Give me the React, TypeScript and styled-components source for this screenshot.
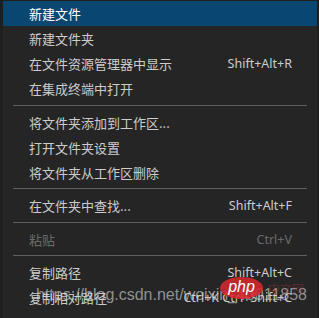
import React from "react";
import styled, { createGlobalStyle } from "styled-components";

const Global = createGlobalStyle`
  html, body { margin: 0; padding: 0; background: #1f1f1f; }
  body { width: 319px; height: 318px; overflow: hidden; }
`;

const Frame = styled.div`
  position: relative;
  width: 319px;
  height: 318px;
  padding: 1px 2px 0 3px;
  box-sizing: border-box;
  font-family: "Noto Sans", "Noto Sans CJK SC", sans-serif;
`;

const Menu = styled.div`
  display: flex;
  flex-direction: column;
  width: 314px;
  height: 317px;
  background: #252526;
`;

const Item = styled.div<{ $active?: boolean; $disabled?: boolean }>`
  display: flex;
  align-items: center;
  justify-content: space-between;
  height: 25px;
  flex: none;
  padding: 0 25px 0 26px;
  font-size: 13px;
  background: ${(p) => (p.$active ? "#094771" : "transparent")};
  color: ${(p) => (p.$active ? "#ffffff" : p.$disabled ? "#6b6b6b" : "#cccccc")};
`;

const Label = styled.span`
  font-family: "Noto Sans CJK SC", sans-serif;
  white-space: nowrap;
`;

const Keys = styled.span`
  font-family: "Noto Sans", sans-serif;
  font-size: 12.5px;
  white-space: nowrap;
`;

const Separator = styled.div`
  flex: none;
  height: 8.5px;
  display: flex;
  align-items: center;
  padding: 0 10px;
  &::after {
    content: "";
    flex: 1;
    height: 1px;
    background: #5f5f5f;
  }
`;

const Watermark = styled.div`
  position: absolute;
  left: 36px;
  top: 286px;
  font-family: "Liberation Sans", Arial, sans-serif;
  font-size: 16px;
  line-height: 18px;
  color: rgba(215, 215, 215, 0.62);
  white-space: nowrap;
  pointer-events: none;
`;

const Logo = styled.div`
  position: absolute;
  left: 220px;
  top: 277px;
  display: flex;
  align-items: center;
  gap: 5px;
  pointer-events: none;
`;

const PhpBadge = styled.div`
  width: 43px;
  height: 22px;
  border-radius: 50%;
  background: rgba(214, 40, 46, 0.88);
  color: #ffffff;
  font-family: "Liberation Sans", Arial, sans-serif;
  font-style: italic;
  font-size: 16px;
  line-height: 20px;
  text-align: center;
`;

const CnText = styled.span`
  font-family: "Noto Sans CJK SC", sans-serif;
  font-size: 12px;
  color: rgba(190, 60, 60, 0.35);
  letter-spacing: 0px;
`;

type Entry =
  | { type: "item"; label: string; keys?: string; active?: boolean; disabled?: boolean }
  | { type: "sep" };

const entries: Entry[] = [
  { type: "item", label: "新建文件", active: true },
  { type: "item", label: "新建文件夹" },
  { type: "item", label: "在文件资源管理器中显示", keys: "Shift+Alt+R" },
  { type: "item", label: "在集成终端中打开" },
  { type: "sep" },
  { type: "item", label: "将文件夹添加到工作区..." },
  { type: "item", label: "打开文件夹设置" },
  { type: "item", label: "将文件夹从工作区删除" },
  { type: "sep" },
  { type: "item", label: "在文件夹中查找...", keys: "Shift+Alt+F" },
  { type: "sep" },
  { type: "item", label: "粘贴", keys: "Ctrl+V", disabled: true },
  { type: "sep" },
  { type: "item", label: "复制路径", keys: "Shift+Alt+C" },
  { type: "item", label: "复制相对路径", keys: "Ctrl+K Ctrl+Shift+C" },
];

export default function App() {
  return (
    <>
      <Global />
      <Frame>
        <Menu>
          {entries.map((e, i) =>
            e.type === "sep" ? (
              <Separator key={i} />
            ) : (
              <Item key={i} $active={e.active} $disabled={e.disabled}>
                <Label>{e.label}</Label>
                {e.keys && <Keys>{e.keys}</Keys>}
              </Item>
            )
          )}
        </Menu>
        <Watermark>https://blog.csdn.net/weixin_43011858</Watermark>
        <Logo>
          <PhpBadge>php</PhpBadge>
          <CnText>中文网</CnText>
        </Logo>
      </Frame>
    </>
  );
}
